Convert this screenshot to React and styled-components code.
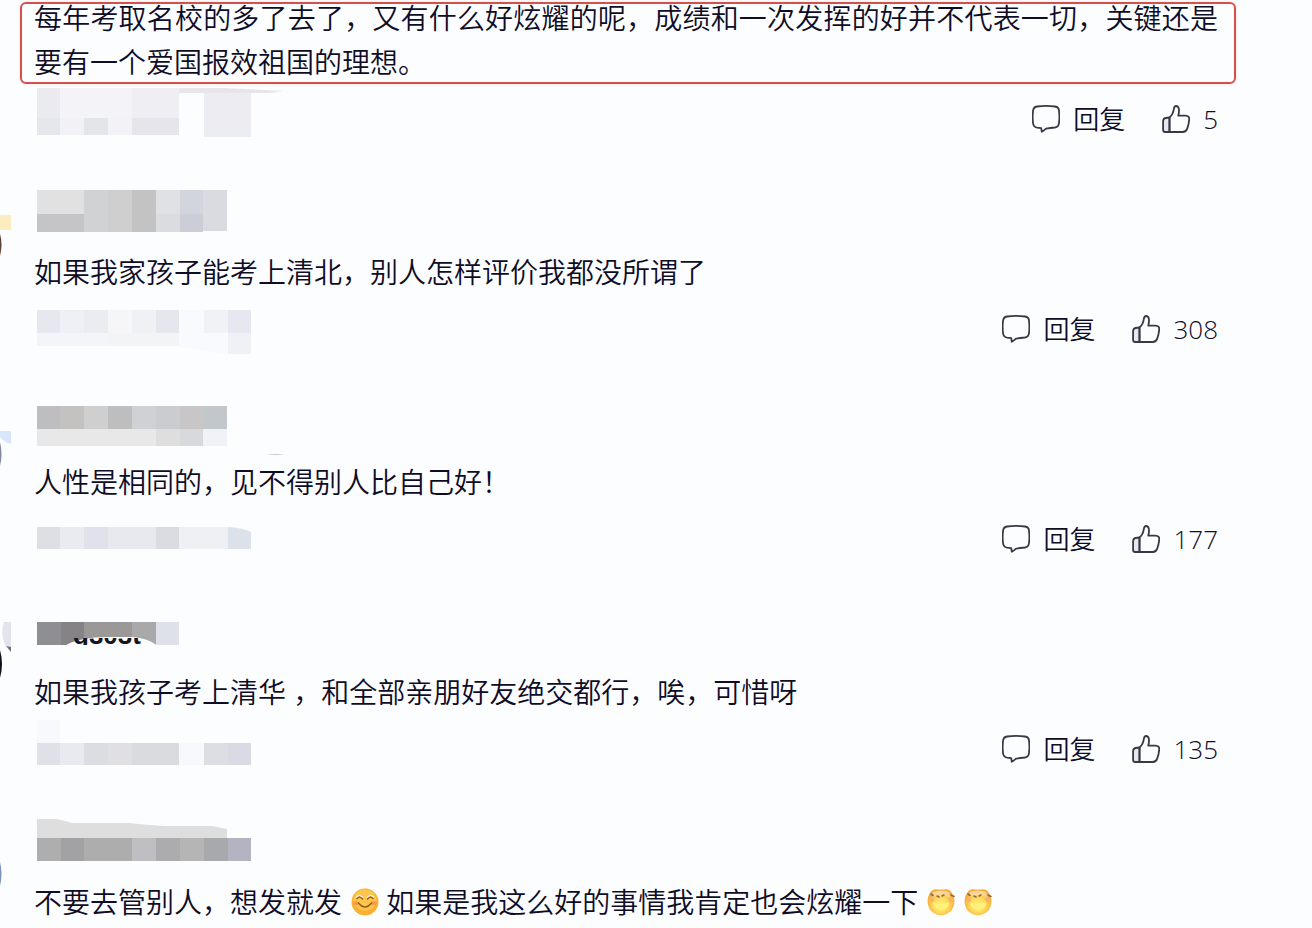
import React from "react";
import styled, { createGlobalStyle } from "styled-components";

const GlobalStyle = createGlobalStyle`
  body {
    margin: 0;
    background: #fcfdff;
    color: #0f0c26;
    font-family: "Open Sans", "Noto Sans CJK SC", sans-serif;
    font-weight: 350;
  }
`;

const comments = [
  {
    id: 1,
    highlighted: true,
    likes: 5,
    meta: [
      [3, 4, 23, 30, "#ebeaf0"],
      [26, 4, 72, 30, "#f4f4f8"],
      [98, 4, 47, 30, "#eeeef3"],
      [3, 34, 23, 17, "#e6e6ed"],
      [26, 34, 24, 17, "#f1f1f6"],
      [50, 34, 24, 17, "#e4e4eb"],
      [74, 34, 24, 17, "#f2f2f7"],
      [98, 34, 47, 17, "#e5e5eb"],
      [170, 9, 47, 44, "#ececf2"],
    ],
    metaShape: "M122 4H190L250 7L236 9H150L122 10Z",
    metaShapeColor: "#e6e6ea",
  },
  {
    id: 2,
    likes: 308,
    name: [
      [3, 34, 47, 24, "#e1e1e1"],
      [50, 34, 24, 42, "#d1d2d3"],
      [74, 34, 24, 42, "#cfcfcf"],
      [98, 34, 24, 42, "#c3c3c4"],
      [122, 34, 24, 24, "#e0e1e4"],
      [146, 34, 23, 24, "#d1d5dc"],
      [169, 34, 24, 41, "#d9dbe1"],
      [3, 58, 47, 18, "#c5c5c7"],
      [122, 58, 24, 18, "#dbdce0"],
      [146, 58, 23, 18, "#cbced6"],
    ],
    meta: [
      [3, 16, 23, 23, "#e6e8ef"],
      [26, 16, 24, 23, "#eff0f6"],
      [50, 16, 24, 23, "#ebecf1"],
      [74, 16, 24, 23, "#f6f6f9"],
      [98, 16, 24, 23, "#f0f1f5"],
      [122, 16, 23, 23, "#e6e7ee"],
      [170, 16, 24, 23, "#f1f2f6"],
      [194, 16, 23, 23, "#e5e8f1"],
      [3, 39, 71, 13, "#f4f5f8"],
      [74, 39, 71, 13, "#f3f4f6"],
      [194, 39, 23, 21, "#f0f1f6"],
    ],
    metaShape: "M145 16H170V39H194V60L145 53Z",
    metaShapeColor: "#f9fafd",
  },
  {
    id: 3,
    likes: 177,
    name: [
      [3, 40, 23, 23, "#bebec0"],
      [26, 40, 24, 23, "#c4c2c1"],
      [50, 40, 24, 23, "#cfcfd0"],
      [74, 40, 24, 23, "#bebebe"],
      [98, 40, 24, 23, "#d0d1d5"],
      [122, 40, 24, 23, "#cbcccf"],
      [146, 40, 24, 23, "#c8c6c6"],
      [170, 40, 23, 23, "#c2c7cc"],
      [3, 63, 119, 17, "#e8e8e9"],
      [122, 63, 24, 17, "#dededf"],
      [146, 63, 23, 17, "#d8d9dc"],
      [169, 63, 24, 17, "#f1f2f7"],
    ],
    nameShape: "M233 89Q242 87 250 89Z",
    nameShapeColor: "#c6c7ce",
    meta: [
      [3, 23, 23, 22, "#dddfe5"],
      [26, 23, 24, 22, "#e9ebf1"],
      [50, 23, 24, 22, "#dfe2eb"],
      [74, 23, 48, 22, "#e8e9ee"],
      [122, 23, 23, 22, "#dadce2"],
      [145, 23, 49, 22, "#eff0f4"],
    ],
    metaShape: "M194 23Q210 24 217 28V45H194Z",
    metaShapeColor: "#dce2ea",
  },
  {
    id: 4,
    likes: 135,
    name: [
      [3, 46, 24, 23, "#8f8e93"],
      [27, 46, 23, 23, "#858385"],
      [50, 46, 48, 23, "#9a9998"],
      [98, 46, 24, 23, "#aaa9a9"],
      [122, 46, 23, 23, "#dfe1ea"],
    ],
    nameText: "g303t",
    meta: [
      [3, 6, 23, 23, "#f8f9fd"],
      [3, 29, 23, 22, "#dfe1e8"],
      [26, 29, 24, 22, "#e8eaf0"],
      [50, 29, 24, 22, "#dcdde2"],
      [74, 29, 24, 22, "#e0e0e4"],
      [98, 29, 47, 22, "#dadbdf"],
      [145, 29, 25, 22, "#f8f9fd"],
      [170, 29, 24, 22, "#dddee3"],
      [194, 29, 23, 22, "#d9dbe4"],
    ],
  },
  {
    id: 5,
    name: [
      [3, 52, 24, 23, "#aeaeaf"],
      [27, 52, 23, 23, "#a2a1a3"],
      [50, 52, 48, 23, "#aeadad"],
      [98, 52, 24, 23, "#bfbfc3"],
      [122, 52, 24, 23, "#acabad"],
      [146, 52, 24, 23, "#b5b5b6"],
      [170, 52, 24, 23, "#a8a9ad"],
      [194, 52, 23, 23, "#b2b4c1"],
    ],
    nameShape: "M3 33H22Q32 35 38 37H95Q112 39 130 40H178L193 43V52H3Z",
    nameShapeColor: "#dedede",
  },
];

const texts = {
  1: "每年考取名校的多了去了，又有什么好炫耀的呢，成绩和一次发挥的好并不代表一切，关键还是要有一个爱国报效祖国的理想。",
  2: "如果我家孩子能考上清北，别人怎样评价我都没所谓了",
  3: "人性是相同的，见不得别人比自己好！",
  4: "如果我孩子考上清华 ，和全部亲朋好友绝交都行，唉，可惜呀",
  5: (
    <>
      不要去管别人，想发就发
      <SmileEmoji /> 如果是我这么好的事情我肯定也会炫耀一下
      <LaughEmoji />
      <LaughEmoji />
    </>
  ),
};

// Blurred out names and dates: a list of [x, y, width, height, fill]
const Mosaic = ({ tiles = [], shape, shapeColor, text, height }) => (
  <MosaicSvg width="260" height={height} aria-hidden="true">
    {shape && <path d={shape} fill={shapeColor} />}
    {tiles.map(([x, y, w, h, fill]) => (
      <rect key={`${x}-${y}`} x={x} y={y} width={w} height={h} fill={fill} />
    ))}
    {text && (
      <>
        <path d="M30 70Q45 61 75 61H98Q114 62 124 70Z" fill="#fcfdff" />
        <svg x="0" y="62" width="140" height="7">
          <MosaicText x="39" y="6">
            {text}
          </MosaicText>
        </svg>
      </>
    )}
  </MosaicSvg>
);

// What shows of the avatars at the edge of the page
const Avatar = ({ id }) => (
  <AvatarSvg width="34" height="120" aria-hidden="true">
    {id === 2 && (
      <>
        <rect y="59" width="11" height="15" fill="#fdecc0" />
        <path d="M0 78Q3 88 0 100Z" fill="#5c4234" />
      </>
    )}
    {id === 3 && (
      <>
        <path d="M0 65H11V78Q5 77 0 71Z" fill="#d9e5fa" />
        <path d="M0 76Q3 88 0 100Z" fill="#8388a0" />
      </>
    )}
    {id === 4 && (
      <>
        <path d="M4 46H11V72L5 69Q0 57 4 46Z" fill="#e1e4ea" />
        <path d="M6 70L11 71V76Z" fill="#6d7078" />
        <path d="M0 74Q4 88 0 102Z" fill="#12121f" />
      </>
    )}
    {id === 5 && <path d="M0 76Q3 88 0 100Z" fill="#7d93b8" />}
  </AvatarSvg>
);

const ReplyIcon = () => (
  <IconSvg viewBox="0 0 28 28" aria-hidden="true">
    <path d="M5 1.5Q14 .3 23 1.5Q27 2 27 6Q27.8 12 27 18Q26.6 22 23 22.5Q18 23 14 23.6Q12 25.5 9.8 26.8L9.2 23.2L5 22.6Q1.4 22 1 18Q.3 12 1 6Q1.4 2 5 1.5Z" />
  </IconSvg>
);

const LikeIcon = () => (
  <IconSvg viewBox="0 0 28 28" aria-hidden="true">
    <path d="M7.5 12.5L3.5 13Q1.3 13.5 1.1 16V25Q1.1 27 3.2 27H7.5Z" fill="#e6e7ef" />
    <path d="M7.5 12.5Q11 9.8 11.8 4.2Q12.2 1 14.2 1Q17 1.4 17 5.4Q17 8 16.3 10.6H23.4Q27.6 10.8 27.2 14.5Q26.9 19 25.2 23.6Q24 27 20.8 27H7.5Z" />
  </IconSvg>
);

function SmileEmoji() {
  return (
    <EmojiSvg viewBox="0 0 28 28" role="img" aria-label="微笑">
      <circle cx="14" cy="14" r="13.5" fill="#fbb030" />
      <ellipse cx="14" cy="12" rx="11.5" ry="10.5" fill="#fdc44e" />
      <ellipse cx="5" cy="15" rx="3" ry="2" fill="#f99a45" />
      <ellipse cx="23" cy="15" rx="3" ry="2" fill="#f99a45" />
      <path
        d="M6 9Q9 6 11.5 9.5M16.5 9.5Q19 6 22 9"
        fill="none"
        stroke="#fff3d0"
        strokeWidth="2"
        strokeLinecap="round"
      />
      <path
        d="M6 10.5Q9 7.5 11.5 11M16.5 11Q19 7.5 22 10.5M7.5 15Q14 23 20.5 15"
        fill="none"
        stroke="#96561a"
        strokeWidth="1.5"
        strokeLinecap="round"
      />
    </EmojiSvg>
  );
}

function LaughEmoji() {
  return (
    <EmojiSvg viewBox="0 0 28 28" role="img" aria-label="偷笑">
      <defs>
        <radialGradient id="laughFace" cx="50%" cy="60%" r="55%">
          <stop offset="0" stopColor="#fff27a" />
          <stop offset="0.5" stopColor="#fedb5e" />
          <stop offset="1" stopColor="#f8ab35" />
        </radialGradient>
      </defs>
      <path d="M5 2.5Q8 .8 11 1.6H17Q20 .8 23 2.5Q27.5 7 27.4 14Q26.5 26 14 27.4Q1.5 26 .6 14Q.5 7 5 2.5Z" fill="url(#laughFace)" />
      <path d="M6 4Q14 1 22 4L23 9Q14 7 5 9Z" fill="#fbd596" />
      <path
        d="M4 6L6 7.5M10 8L12 9M15 8L17 7M24 7L27 8.5"
        fill="none"
        stroke="#8c6a4a"
        strokeWidth="1.6"
        strokeLinecap="round"
      />
      <path d="M6 14Q14 18 22 14Q22 21 14 22Q6 21 6 14Z" fill="#fff27a" />
      <circle cx="5" cy="12" r="2" fill="#f9b06c" />
      <circle cx="23" cy="12" r="2" fill="#f9b06c" />
    </EmojiSvg>
  );
}

const Comment = ({ comment }) => (
  <Item>
    <Avatar id={comment.id} />
    <Body>
      {comment.name && (
        <Mosaic
          tiles={comment.name}
          shape={comment.nameShape}
          shapeColor={comment.nameShapeColor}
          text={comment.nameText}
          height="94"
        />
      )}
      <Text $highlighted={comment.highlighted}>{texts[comment.id]}</Text>
      {comment.likes && (
        <Footer>
          <Mosaic
            tiles={comment.meta}
            shape={comment.metaShape}
            shapeColor={comment.metaShapeColor}
            height="72"
          />
          <Actions>
            <Action type="button">
              <ReplyIcon />
              回复
            </Action>
            <Action type="button" aria-label={`赞 ${comment.likes}`}>
              <LikeIcon />
              {comment.likes}
            </Action>
          </Actions>
        </Footer>
      )}
    </Body>
  </Item>
);

const App = () => {
  return (
    <>
      <GlobalStyle />
      <List lang="zh-CN">
        {comments.map((comment) => (
          <Comment key={comment.id} comment={comment} />
        ))}
      </List>
    </>
  );
};

export default App;

const List = styled.main`
  padding-right: 94px;
  overflow: hidden;
`;

const Item = styled.article`
  display: flex;
`;

const Body = styled.div`
  flex: 1;
  min-width: 0;
`;

const Text = styled.p`
  position: relative;
  margin: ${({ $highlighted }) => ($highlighted ? "-4px 0 0" : "0")};
  font-size: 28px;
  line-height: 44px;
  text-align: justify;
  /* red frame drawn around the highlighted comment */
  &::after {
    content: "";
    display: ${({ $highlighted }) => ($highlighted ? "block" : "none")};
    position: absolute;
    top: 6px;
    right: -18px;
    bottom: 0;
    left: -14px;
    border: 2px solid #d4504c;
    border-radius: 6px;
    box-shadow: 0 0 3px #fbdcd6;
  }
`;

const Footer = styled.footer`
  display: flex;
  justify-content: space-between;
  align-items: center;
`;

const Actions = styled.div`
  display: flex;
  gap: 37px;
`;

const Action = styled.button`
  display: flex;
  align-items: center;
  gap: 13px;
  padding: 0 0 2px;
  border: 0;
  background: none;
  color: inherit;
  font: inherit;
  font-size: 26px;
  line-height: 36px;
  cursor: pointer;
`;

const MosaicSvg = styled.svg`
  display: block;
`;

const MosaicText = styled.text`
  fill: #15151f;
  font-family: "Liberation Sans", sans-serif;
  font-size: 26px;
  font-weight: 700;
`;

const AvatarSvg = styled.svg`
  flex: none;
`;

const IconSvg = styled.svg`
  width: 28px;
  height: 28px;
  fill: none;
  stroke: #393946;
  stroke-width: 1.8;
  stroke-linejoin: round;
`;

const EmojiSvg = styled.svg`
  width: 28px;
  height: 28px;
  margin-left: 9px;
  vertical-align: -3px;
`;
